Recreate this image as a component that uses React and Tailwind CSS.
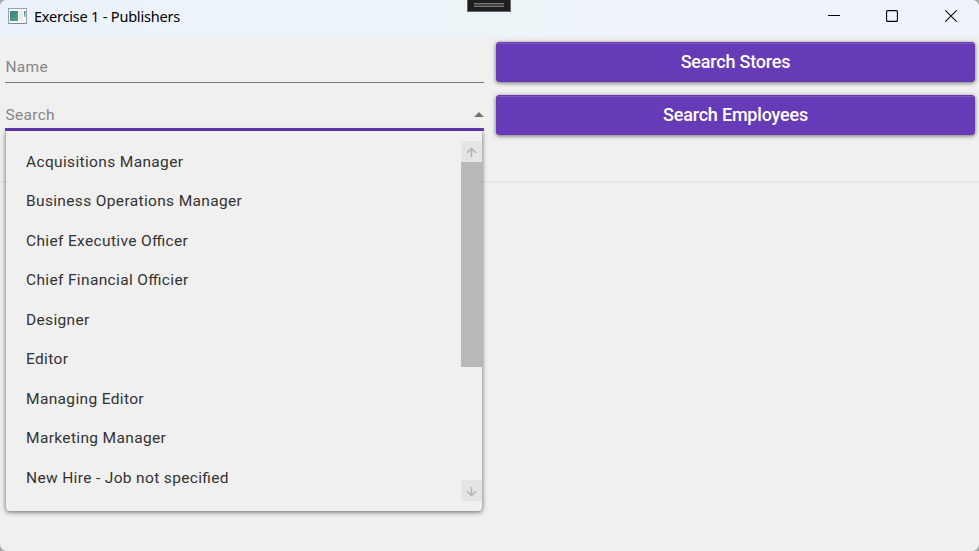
const jobs = [
  'Acquisitions Manager',
  'Business Operations Manager',
  'Chief Executive Officer',
  'Chief Financial Officier',
  'Designer',
  'Editor',
  'Managing Editor',
  'Marketing Manager',
  'New Hire - Job not specified',
];

function AppIcon() {
  return (
    <svg width="19" height="16" viewBox="0 0 19 16" className="shrink-0">
      <defs>
        <linearGradient id="pane" x1="0" y1="0" x2="1" y2="1">
          <stop offset="0" stopColor="#3c7b91" />
          <stop offset="1" stopColor="#51a878" />
        </linearGradient>
        <linearGradient id="strip" x1="0" y1="0" x2="0" y2="1">
          <stop offset="0" stopColor="#3f7f9b" />
          <stop offset="1" stopColor="#7fc09c" />
        </linearGradient>
      </defs>
      <rect x="0.5" y="0.5" width="18" height="15" fill="#f7f8f9" stroke="#9ba2ab" />
      <path d="M1 15.5h17.5" stroke="#858c95" />
      <rect x="2" y="3" width="8" height="10" fill="url(#pane)" />
      <rect x="11" y="3" width="4" height="10" fill="#ececec" />
      <rect x="16" y="3" width="1.5" height="6" fill="url(#strip)" />
    </svg>
  );
}

function TitleBar() {
  return (
    <header className="relative flex h-[35px] shrink-0 items-start bg-linear-to-r from-[#ecf2fb] via-[#edf4f8] to-[#eff3fb] pl-2">
      <div className="flex h-8 items-center gap-[7px]">
        <AppIcon />
        <h1 className="font-['Noto_Sans',sans-serif] text-[14.5px] leading-5 tracking-[-0.2px] text-black">Exercise 1 - Publishers</h1>
      </div>
      <div className="absolute top-0 left-[467px] flex h-3 w-11 flex-col items-center border border-t-0 border-[#666] bg-[#1e1e1e] pt-[3px]">
        <div className="h-1 w-[30px] border-y border-[#777] bg-[#444]" />
      </div>
      <div className="ml-auto flex h-8 items-center pr-[22px] text-black">
        <svg width="12" height="14" viewBox="0 0 12 14" stroke="currentColor"><path d="M0 6.5h12" /></svg>
        <svg width="12" height="14" viewBox="0 0 12 14" fill="none" stroke="currentColor" strokeWidth="1.1" className="ml-[46px]"><rect x="0.6" y="1.6" width="10.8" height="10.8" rx="1" /></svg>
        <svg width="12" height="14" viewBox="0 0 12 14" fill="none" stroke="currentColor" strokeWidth="1.1" className="ml-[47px]"><path d="M0.3 1.3l11.4 11.4M11.7 1.3L0.3 12.7" /></svg>
      </div>
    </header>
  );
}

function ActionButton({ children }) {
  return (
    <button className="flex h-10 w-full items-center justify-center rounded-[3px] border border-[#6739b5] bg-[#673ab7] pb-[2px] text-[18px] font-medium tracking-[-0.2px] text-white shadow-[inset_0_1px_0_#7d57c2,0_1px_4px_rgba(0,0,0,0.55)]">
      {children}
    </button>
  );
}

function ScrollArrow({ down }) {
  return (
    <div className="flex h-[21px] w-[21px] shrink-0 items-center justify-center bg-[#e5e5e5] pt-[2px]">
      <svg width="11" height="11" viewBox="0 0 11 11" fill="none" stroke="#b2b2b2" strokeWidth="1.5" className={down ? 'rotate-180' : ''}>
        <path d="M5.5 10V1.5M1 5.8L5.5 1.5L10 5.8" />
      </svg>
    </div>
  );
}

function JobMenu() {
  return (
    <div className="absolute top-[34px] left-[1px] flex h-[380px] w-[476px] rounded-b-[4px] bg-[#f0f0f0] shadow-[0_1px_5px_rgba(0,0,0,0.6)]">
      <ul className="flex-1 pt-[11.5px]">
        {jobs.map((job) => (
          <li key={job} className="flex h-[39.5px] items-center pl-5 text-[15.5px] tracking-[0.35px] text-[#333] [font-feature-settings:'liga'_1]">{job}</li>
        ))}
      </ul>
      <div className="flex w-[21px] flex-col pt-2.5 pb-2.5">
        <ScrollArrow />
        <div className="h-[205px] bg-[#b9b9b9]" />
        <div className="flex-1" />
        <ScrollArrow down />
      </div>
    </div>
  );
}

export default function App() {
  return (
    <div className="h-[551px] w-[979px] bg-[#a7abac] font-[Roboto,sans-serif]">
      <div className="flex h-full flex-col overflow-hidden rounded-[7px] bg-[#f0f0f0]">
        <TitleBar />
        <main className="flex-1">
          <div className="grid h-[148px] grid-cols-[479px_479px] gap-x-3 border-b-2 border-[#e6e6e6] pt-[7px] pl-[5px]">
            <div>
              <div className="flex h-[41px] items-center border-b border-[#777] pt-[11px] pl-[0.5px] text-[15.5px] tracking-[0.3px] text-[#868686]">Name</div>
              <div className="relative mt-[14px]">
                <div className="flex h-[34px] items-center justify-between border-b-3 border-[#673ab7] pt-[7px] pl-[0.5px] text-[15.5px] tracking-[0.3px] text-[#868686]">
                  Search
                  <svg width="10" height="5" viewBox="0 0 10 5" fill="#757575" className="mb-[3px]"><path d="M0 5L5 0L10 5z" /></svg>
                </div>
                <JobMenu />
              </div>
            </div>
            <div className="flex flex-col gap-[13px]">
              <ActionButton>Search Stores</ActionButton>
              <ActionButton>Search Employees</ActionButton>
            </div>
          </div>
        </main>
      </div>
    </div>
  );
}
